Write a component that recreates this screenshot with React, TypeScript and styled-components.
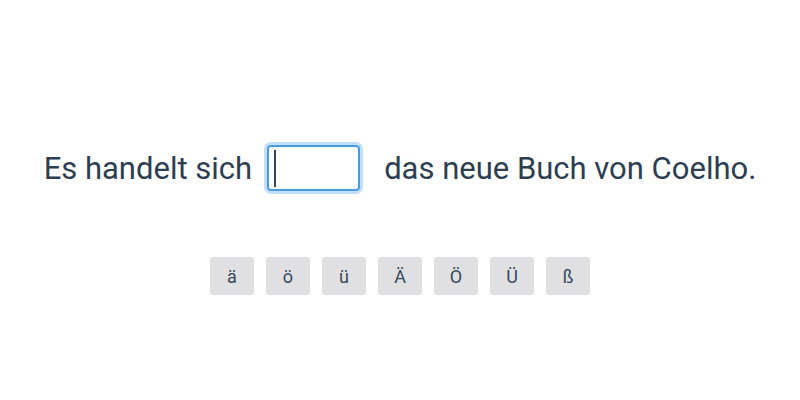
import React, { useState } from 'react';
import styled, { createGlobalStyle } from 'styled-components';

const GlobalStyle = createGlobalStyle`
  body {
    margin: 0;
    background: #fff;
    font-family: Roboto, "Liberation Sans", Arial, sans-serif;
    color: #2c3e50;
  }
`;

const Page = styled.main`
  display: flex;
  flex-direction: column;
  align-items: center;
  box-sizing: border-box;
  height: 400px;
  padding-top: 145px;
`;

const Sentence = styled.div`
  display: flex;
  align-items: center;
  height: 46px;
  font-size: 31px;
  white-space: nowrap;
`;

const BlankWrap = styled.label`
  position: relative;
  display: block;
  margin: 0 24px 0 15px;
`;

const Blank = styled.input`
  display: block;
  box-sizing: border-box;
  width: 93px;
  height: 46px;
  padding: 0 7px;
  border: 2px solid #4a9be0;
  border-radius: 4px;
  box-shadow: 0 0 0 3px rgba(120, 185, 240, 0.45);
  outline: none;
  font-family: inherit;
  font-size: 31px;
  color: #2c3e50;
  caret-color: transparent;
`;

const Caret = styled.span`
  position: absolute;
  left: 7px;
  top: 5px;
  width: 2px;
  height: 37px;
  background: #34495e;
  pointer-events: none;
`;

const Keys = styled.div`
  display: flex;
  gap: 12px;
  margin-top: 66px;
`;

const Key = styled.button`
  width: 44px;
  height: 38px;
  padding: 0;
  border: none;
  border-radius: 3px;
  background: #e0e0e2;
  color: #34495e;
  font-family: Roboto, "Liberation Sans", Arial, sans-serif;
  font-size: 18px;
  cursor: pointer;
`;

const letters = ['ä', 'ö', 'ü', 'Ä', 'Ö', 'Ü', 'ß'];

export default function App() {
  const [value, setValue] = useState('');

  return (
    <>
      <GlobalStyle />
      <Page>
        <Sentence>
          <span>Es handelt sich</span>
          <BlankWrap>
            <Blank
              autoFocus
              value={value}
              onChange={(e) => setValue(e.target.value)}
            />
            {value === '' && <Caret />}
          </BlankWrap>
          <span>das neue Buch von Coelho.</span>
        </Sentence>
        <Keys>
          {letters.map((l) => (
            <Key key={l} onClick={() => setValue(value + l)}>
              {l}
            </Key>
          ))}
        </Keys>
      </Page>
    </>
  );
}
